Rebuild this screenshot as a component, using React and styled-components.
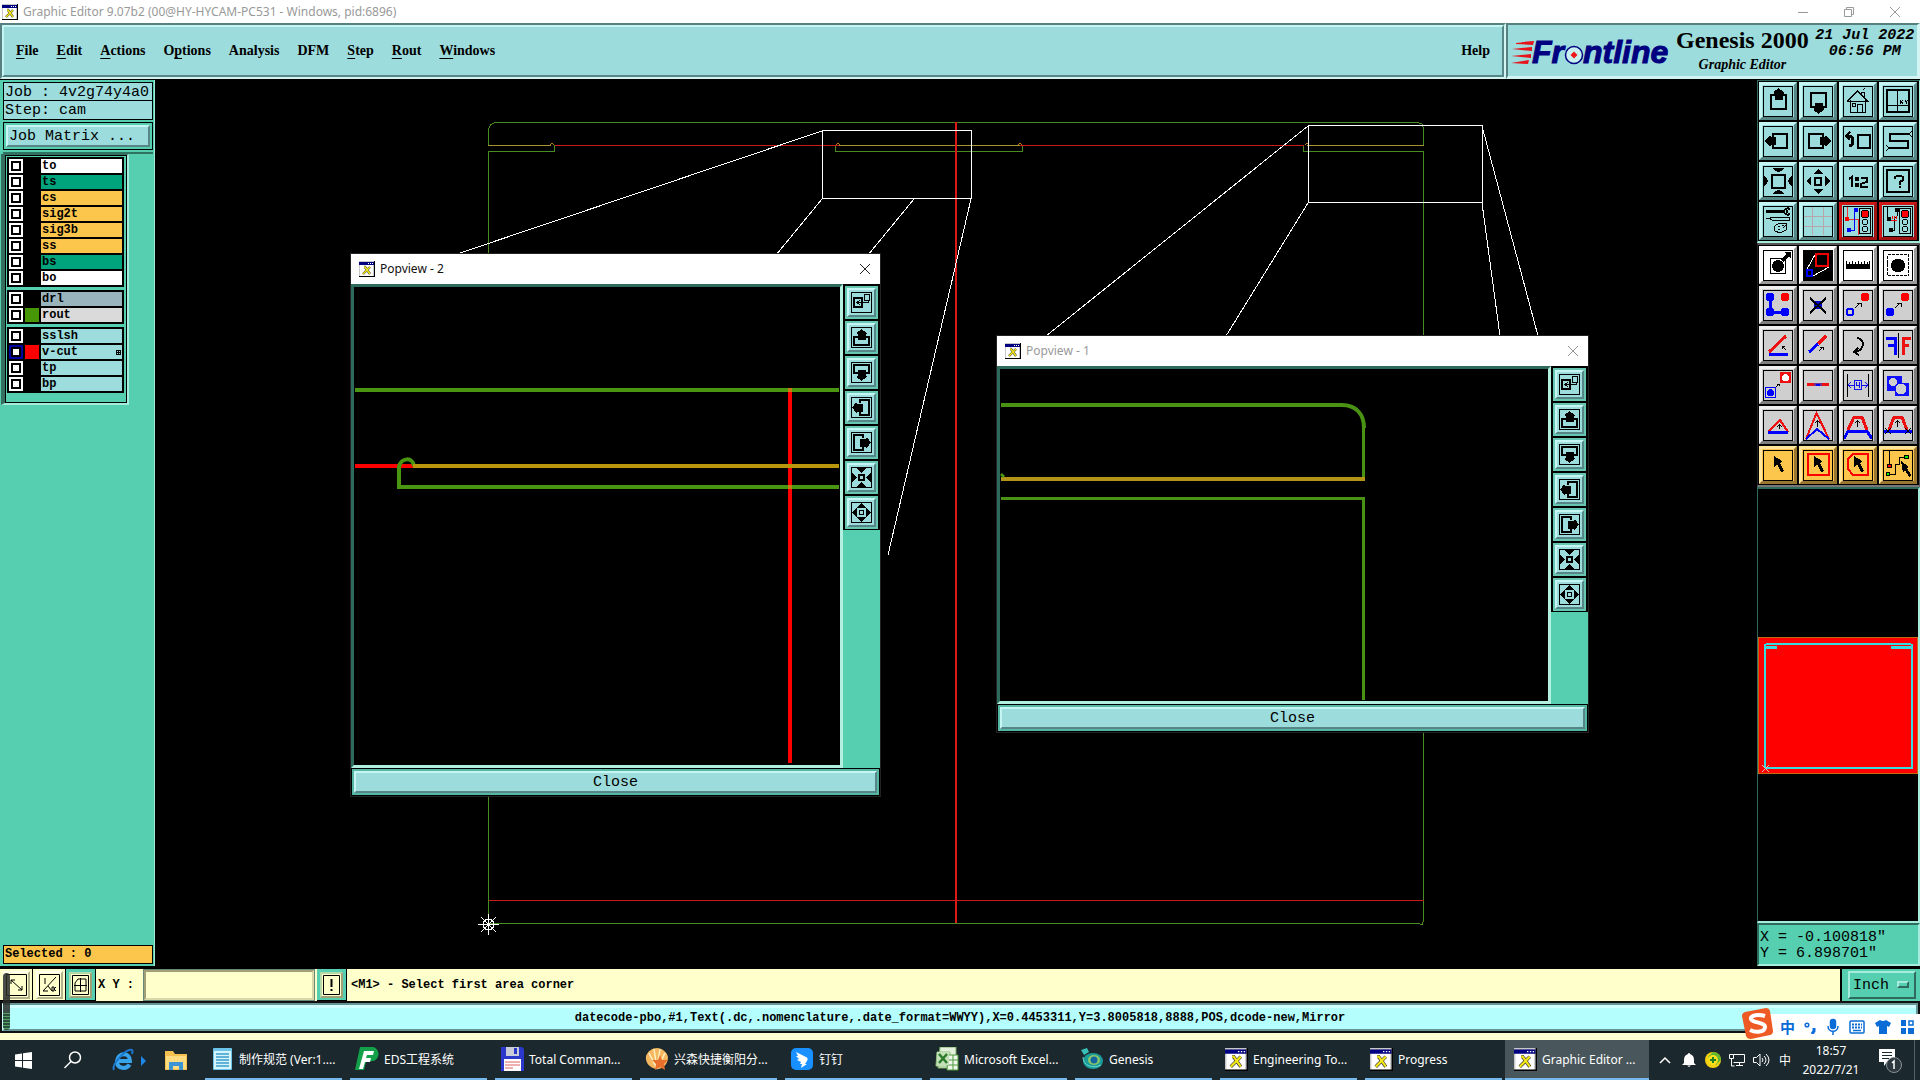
import React, { useState } from "react";
import styled, { createGlobalStyle, css } from "styled-components";

const GlobalStyle = createGlobalStyle`
  * {
    box-sizing: border-box;
  }
  body {
    margin: 0;
    background: #000;
    overflow: hidden;
  }
  button, input, select {
    font: inherit;
    color: inherit;
    margin: 0;
    padding: 0;
    border: 0;
    border-radius: 0;
    background: none;
  }
  svg {
    display: block;
  }
`;

const uiFont = `"Noto Sans", "Noto Sans CJK SC", sans-serif`;
const monoFont = `"Liberation Mono", monospace`;
const serifFont = `"Liberation Serif", serif`;

const raised = css`
  border-style: solid;
  border-color: #c6f6f4 #578686 #578686 #c6f6f4;
`;

const sunken = css`
  border-style: solid;
  border-color: #578080 #d2f4f2 #d2f4f2 #578080;
`;

const Page = styled.div`
  display: flex;
  flex-direction: column;
  min-height: 100vh;
  background: #000;
  color: #000;
  font-family: ${monoFont};
  font-size: 15px;
`;

const TitleBar = styled.div`
  display: flex;
  align-items: center;
  height: 23px;
  padding: 0 2px;
  background: #fff;
  color: #999;
  font-family: ${uiFont};
  font-size: 12px;
`;

const TitleText = styled.span`
  flex: 1;
  margin-left: 5px;
  white-space: nowrap;
`;

const WindowButton = styled.button`
  display: flex;
  align-items: center;
  justify-content: center;
  width: 46px;
  height: 22px;
`;

const Header = styled.header`
  display: flex;
  height: 57px;
  border-bottom: 1px solid #000;
  background: #9cdcdc;
  font-family: ${serifFont};
  font-weight: bold;
  font-size: 14px;
`;

const MenuFrame = styled.div`
  ${sunken}
  flex: 1;
  display: flex;
  border-width: 2px;
`;

const MenuBar = styled.nav`
  ${raised}
  flex: 1;
  display: flex;
  align-items: center;
  gap: 18px;
  padding: 0 12px;
  border-width: 2px;
`;

const MenuButton = styled.button`
  margin-left: ${(props) => (props.$end ? "auto" : "0")};

  u {
    text-underline-offset: 3px;
  }
`;

const Brand = styled.div`
  ${sunken}
  display: flex;
  align-items: center;
  width: 414px;
  border-width: 2px 3px 3px 2px;
  white-space: nowrap;
`;

const BrandNames = styled.div`
  display: flex;
  flex-direction: column;
  align-items: center;
  margin-left: 2px;
`;

const Product = styled.span`
  font-size: 24px;
  line-height: 28px;
`;

const SubProduct = styled.span`
  font-style: italic;
  line-height: 22px;
`;

const Stamp = styled.time`
  align-self: flex-start;
  flex: 1;
  padding: 3px 0 0 4px;
  text-align: center;
  font-family: ${monoFont};
  font-style: italic;
  font-size: 15px;
  line-height: 16px;
`;

const Main = styled.main`
  flex: 1;
  display: flex;
  border-bottom: 2px solid #000;
`;

const Sidebar = styled.aside`
  display: flex;
  flex-direction: column;
  width: 155px;
  padding: 2px 1px 2px 3px;
  border-right: 1px solid #a0e8d8;
  background: #56cfb0;
`;

const JobLine = styled.div`
  height: 19px;
  padding-left: 1px;
  border: 1px solid #000;
  background: #9cdcdc;
  line-height: 19px;
  white-space: nowrap;

  & + & {
    border-top: 0;
  }
`;

const MatrixFrame = styled.div`
  margin: 2px 0 2px;
  padding: 2px;
  border: 1px solid #000;
`;

const MatrixButton = styled.button`
  ${raised}
  display: block;
  width: 100%;
  height: 22px;
  padding-left: 1px;
  border-width: 2px;
  background: #9cdcdc;
  text-align: left;
  line-height: 17px;
`;

const LayerArea = styled.div`
  flex: 1;
  border-top: 2px solid #2f7262;
`;

const LayerPanel = styled.div`
  width: 128px;
  margin-left: -2px;
  border: solid;
  border-width: 1px 2px 2px 4px;
  border-color: #356f60 #a6ecdc #a6ecdc #356f60;
`;

const LayerList = styled.div`
  display: flex;
  flex-direction: column;
  gap: 3px;
  padding: 1px 2px 9px 1px;
  border: 1px solid #000;
`;

const LayerGroup = styled.div`
  display: flex;
  flex-direction: column;
  gap: 2px;
  padding: 2px;
  background: #000;
`;

const LayerRow = styled.label`
  display: flex;
  gap: 2px;
  height: 14px;
  font-size: 12px;
  font-weight: bold;
  line-height: 13px;
`;

const LayerCheck = styled.input`
  appearance: none;
  width: 14px;
  height: 14px;
  border: 2px solid #fff;
  background: #fff;
  box-shadow: inset 0 0 0 2px #000;

  &:checked {
    border-color: #0000a0;
  }
`;

const LayerColor = styled.span`
  width: 14px;
  background: ${(props) => props.$color || "#000"};
`;

const LayerName = styled.span`
  flex: 1;
  display: flex;
  align-items: center;
  justify-content: space-between;
  padding: 0 1px;
  background: ${(props) => props.$color};
`;

const SelectedBox = styled.div`
  height: 19px;
  padding-left: 1px;
  border: 1px solid #000;
  background: #fcc54c;
  font-size: 12px;
  font-weight: bold;
  line-height: 17px;
`;

const Workspace = styled.section`
  position: relative;
  flex: 1;
  overflow: hidden;
  background: #000;
`;

const Drawing = styled.svg`
  width: 100%;
  height: 100%;
`;

const DrawingLayer = styled.div`
  position: absolute;
  inset: 0;
`;

const PopWindow = styled.div`
  position: absolute;
  left: ${(props) => props.$x}px;
  top: ${(props) => props.$y}px;
  width: ${(props) => props.$w}px;
  background: #000;
  outline: 1px solid #222;
`;

const PopTitle = styled.div`
  display: flex;
  align-items: center;
  height: 30px;
  padding: 0 7px 1px 8px;
  background: #fff;
  color: ${(props) => (props.$active ? "#111" : "#999")};
  font-family: ${uiFont};
  font-size: 12px;
`;

const PopClose = styled.button`
  padding: 8px;
  margin-right: -6px;
`;

const PopBody = styled.div`
  display: flex;
  height: ${(props) => props.$h}px;
`;

const PopView = styled.div`
  flex: 1;
  min-width: 0;
  border: 3px solid;
  border-color: #2f6b5d #b4f0e0 #b4f0e0 #2f6b5d;
  overflow: hidden;
`;

const PopTools = styled.div`
  display: flex;
  flex-direction: column;
  gap: 2px;
  width: 37px;
  padding: 2px 2px 0;
  background: linear-gradient(#000 246px, #56cfb0 246px);
`;

const PopTool = styled.button`
  height: 33px;
  border: 2px solid #66c6b2;

  span {
    ${raised}
    display: flex;
    align-items: center;
    justify-content: center;
    height: 29px;
    border-width: 2px;
    background: #9cdcdc;
  }
`;

const PopFooter = styled.button`
  display: block;
  width: 100%;
  padding: 2px;
  border: 1px solid #000;
  background: #56b8a4;

  span {
    ${raised}
    display: block;
    height: 22px;
    border-width: 2px;
    background: #9cdcdc;
    line-height: 19px;
  }
`;

const ToolColumn = styled.aside`
  display: flex;
  flex-direction: column;
  width: 163px;
`;

const ToolGrid = styled.div`
  display: grid;
  grid-template-columns: repeat(4, 38px);
  gap: 2px;
  padding: 1px;
  border: 1px solid;
  border-color: ${(props) =>
    props.$gray ? "#555 #555 #777 #222" : "#2f6b5d #a6ecdc #a6ecdc #2f6b5d"};
  border-width: ${(props) => (props.$gray ? "2px 1px 2px" : "1px 1px 2px")};
`;

const faces = {
  teal: ["#9cdcdc", "#c6f6f4", "#578686"],
  white: ["#ffffff", "#ffffff", "#9a9a9a"],
  gray: ["#cfcfcf", "#f0f0f0", "#7e7e7e"],
  orange: ["#fcc54c", "#ffe49c", "#9a7630"],
  alert: ["#9cdcdc", "#d01818", "#a01414"],
};

const ToolButton = styled.button`
  display: flex;
  align-items: center;
  justify-content: center;
  height: 38px;
  border: 3px solid;
  border-color: ${(props) => {
    const [, light, dark] = faces[props.$face];
    return `${light} ${dark} ${dark} ${light}`;
  }};
  background: ${(props) => faces[props.$face][0]};
`;

const Overview = styled.div`
  flex: 1;
  display: flex;
  align-items: center;
  border-top: 2px solid #2f6b5d;
  border-left: 1px solid #2f6b5d;
  border-right: 2px solid #a6ecdc;
  border-bottom: 2px solid #a6ecdc;
`;

const Coordinates = styled.div`
  height: 43px;
  padding: 5px 0 0 1px;
  border: 2px solid;
  border-color: #2f6b5d #a6ecdc #a6ecdc #2f6b5d;
  background: #56cfb0;
  line-height: 16px;
`;

const BottomArea = styled.footer`
  position: relative;
`;

const CommandBar = styled.div`
  display: flex;
  height: 33px;
  border-top: 1px solid #000;
  background: #ffffcc;
  font-size: 12px;
  font-weight: bold;
`;

const CommandButton = styled.button`
  display: flex;
  align-items: center;
  justify-content: center;
  width: ${(props) => (props.$on ? 30 : 33)}px;
  border: solid #000;
  border-width: 0 1px 1px 0;
  background: ${(props) => (props.$on ? "#56cfb0" : "#ffffcc")};

  span {
    padding: 1px;
    border: 2px solid;
    border-color: ${(props) =>
      props.$on ? "#b4d8a8 #a0a078 #a0a078 #b4d8a8" : "#fffff0 #b4b48c #b4b48c #fffff0"};
    background: #ffffcc;
  }
`;

const EntryLabel = styled.label`
  display: flex;
  align-items: center;
  flex-shrink: 0;
  width: 47px;
  padding-left: 2px;
`;

const Entry = styled.input`
  width: 170px;
  margin: 1px 3px 1px 1px;
  padding-left: 4px;
  border: 2px solid;
  border-color: #a0a078 #d8d8a8 #d8d8a8 #a0a078;
  outline: 1px solid #688878;
`;

const Prompt = styled.div`
  flex: 1;
  padding-left: 4px;
  line-height: 32px;
`;

const UnitBox = styled.div`
  position: relative;
  width: 80px;
  padding: 2px 4px 2px 6px;
  border-left: 2px solid #000;
  background: #56cfb0;
  font-size: 15px;
  font-weight: normal;
`;

const UnitSelect = styled.select`
  appearance: none;
  width: 68px;
  height: 28px;
  padding-left: 3px;
  border: 2px solid;
  border-color: #a6ecdc #2f6b5d #2f6b5d #a6ecdc;
`;

const UnitMark = styled.i`
  position: absolute;
  right: 11px;
  top: 12px;
  width: 12px;
  height: 7px;
  border: 2px solid;
  border-color: #a6ecdc #2f6b5d #2f6b5d #a6ecdc;
  pointer-events: none;
`;

const StatusFrame = styled.div`
  padding: 0 2px 9px;
  border-top: 2px solid #111;
  background: linear-gradient(#111 30px, #ffffd2 30px);
`;

const StatusLine = styled.div`
  height: 28px;
  border: 2px solid;
  border-color: #679494 #679494 #679494 #d0ffff;
  background: #b4fefe;
  box-shadow: inset 0 3px #d0ffff;
  font-size: 12px;
  font-weight: bold;
  line-height: 26px;
  text-align: center;
`;

const LevelMeter = styled.div`
  position: absolute;
  left: 3px;
  top: 5px;
  width: 7px;
  height: 57px;
  border-radius: 4px;
  background: repeating-linear-gradient(#55a065 0 1px, #2c5040 1px 3px) bottom / 100% 17px no-repeat,
    rgba(40, 44, 40, 0.85);
`;

const ImeBar = styled.div`
  position: absolute;
  right: 0;
  bottom: 1px;
  display: flex;
  align-items: center;
  justify-content: space-between;
  width: 166px;
  height: 25px;
  padding: 0 5px 0 26px;
  background: #fff;
  color: #0a6cd6;
  font-family: "Noto Sans CJK SC", sans-serif;
  font-size: 15px;
  font-weight: bold;
`;

const ImeLogo = styled.svg`
  position: absolute;
  left: -12px;
  bottom: 0;
`;

const TaskBar = styled.nav`
  display: flex;
  height: 40px;
  background: #1b282d;
  color: #fff;
  font-family: ${uiFont};
  font-size: 12px;
`;

const Pinned = styled.div`
  display: flex;
  align-items: center;
  width: 205px;
  padding-left: 15px;
`;

const PinnedButton = styled.button`
  width: ${(props) => props.$w}px;
`;

const TaskList = styled.div`
  display: flex;
  gap: 8px;
`;

const Task = styled.button`
  display: flex;
  align-items: center;
  gap: 5px;
  width: ${(props) => (props.$active ? 144 : 137)}px;
  padding-left: ${(props) => (props.$active ? 9 : 5)}px;
  margin-left: ${(props) => (props.$active ? -5 : 0)}px;
  border-bottom: 2px solid #76b9ed;
  background: ${(props) => (props.$active ? "#49565b" : "none")};
  white-space: nowrap;
`;

const Tray = styled.div`
  display: flex;
  align-items: center;
  margin-left: auto;
`;

const TrayButton = styled.button`
  display: flex;
  align-items: center;
  justify-content: center;
  width: 24px;
  height: 38px;
`;

const Clock = styled.time`
  width: 68px;
  text-align: center;
  line-height: 19px;
`;

const Notice = styled.button`
  width: 49px;
  padding-left: 12px;
`;

const ShowDesktop = styled.span`
  width: 6px;
  height: 40px;
  border-left: 1px solid #566167;
`;

const AppIcon = ({ size = 16 }) => (
  <svg width={size} height={size} viewBox="0 0 16 16">
    <rect width="16" height="16" fill="#c8c8c8" />
    <path d="M1 3h13v12H1z" fill="#fff" />
    <path d="M0 1h15v3H0z" fill="#000080" />
    <path d="M9 2h1v1H9zM11 2h1v1h-1zM13 2h1v1h-1z" fill="#fff" />
    <path d="M15.5 0v16M0 15.5h16" stroke="#000" />
    <path d="M5 6h1l5 7M11 6l-7 7" fill="none" stroke="#333" strokeWidth="2.4" />
    <path d="M5 6h1l5 7M11 6l-7 7" fill="none" stroke="#f4e818" strokeWidth="1.5" />
  </svg>
);

const Cross = ({ color }) => (
  <svg width="12" height="12" viewBox="0 0 12 12">
    <path d="M1 1l10 10M11 1L1 11" stroke={color} fill="none" />
  </svg>
);

const smallArrow = (d, head) => (
  <g fill="none" stroke="#000">
    <path d={d} />
    <path d={head} />
  </g>
);

const cursor = <path d="M11 6l8 5-2 2 4 8-3 1-4-8-3 3z" fill="#000" />;

const lights = (
  <g stroke="#000">
    <rect x="16.5" y="2.5" width="11" height="25" fill="none" />
    <circle cx="22" cy="8" r="4" fill="#f00" />
    <circle cx="22" cy="16" r="2.8" fill="none" />
    <circle cx="22" cy="23" r="2.8" fill="none" />
  </g>
);

const glyphs = {
  up: (
    <>
      <rect x="8" y="9" width="15" height="14" fill="none" stroke="#000" strokeWidth="2" />
      <path d="M15.5 2l5 4v2h-1v6h-8V8h-1V6z" />
    </>
  ),
  down: (
    <>
      <rect x="8" y="7" width="15" height="14" fill="none" stroke="#000" strokeWidth="2" />
      <path d="M15.5 28l-5-4v-2h1v-5h8v5h1v2z" />
    </>
  ),
  home: (
    <path
      d="M7.5 14v12.5h15V14M4 15.5L14.5 5 25 15.5H4M14.5 26v-8h5v8M9.5 17.5h3v3h-3zM18.5 8V6h3v6M20 4l2-2"
      fill="none"
      stroke="#000"
    />
  ),
  page: (
    <g fill="none" stroke="#000">
      <rect x="4" y="4" width="22" height="22" strokeWidth="2" />
      <path d="M14.5 4v22M4 19.5h22M17 14l3 4M20 14l-3 4M22 14l1 2v2M25 14l-2 2" />
    </g>
  ),
  left: (
    <>
      <rect x="10" y="8" width="14" height="14" fill="none" stroke="#000" strokeWidth="2" />
      <path d="M2 15l4-5h2v1h5v8H8v1H6z" />
    </>
  ),
  right: (
    <>
      <rect x="6" y="8" width="14" height="14" fill="none" stroke="#000" strokeWidth="2" />
      <path d="M28 15l-4-5h-2v1h-5v8h5v1h2z" />
    </>
  ),
  back: (
    <g fill="none" stroke="#000" strokeWidth="2">
      <rect x="15" y="9" width="12" height="13" />
      <path d="M4 10h3c4 0 4 10-1 10" strokeWidth="3" />
      <path d="M7 6L3 10l4 4" />
    </g>
  ),
  snake: (
    <g fill="none" stroke="#000">
      <path d="M26 8H7v7h18v7H6" strokeWidth="2" />
      <path d="M26 8l3-3M26 8l3 3M6 22l-3-3M6 22l-3 3" />
    </g>
  ),
  fit: (
    <>
      <rect x="9" y="9" width="13" height="13" fill="none" stroke="#000" strokeWidth="2" />
      <path d="M10 2h11v1l-3 2-2.5 1-2.5-1-3-2zM10 28h11v-1l-3-2-2.5-1-2.5 1-3 2zM1 10v10h1l2-3 1-2-1-2-2-3zM29 10v10h-1l-2-3-1-2 1-2 2-3z" />
    </>
  ),
  expand: (
    <>
      <rect x="12" y="12" width="6" height="7" fill="none" stroke="#000" strokeWidth="2" />
      <path d="M10 8h10l-5-5zM10 23h10l-5 5zM8 10v10l-5-5zM22 10v10l5-5z" />
    </>
  ),
  ratio: (
    <path
      d="M6 13l3-2v10M13 12h2v2h-2zM13 18h2v2h-2zM18 12h6v4h-1l-5 2v3h7"
      fill="none"
      stroke="#000"
      strokeWidth="2"
    />
  ),
  help: (
    <g fill="none" stroke="#000" strokeWidth="2">
      <rect x="4" y="4" width="22" height="22" />
      <path d="M12 13v-2l2-1h4l2 1v3l-3 2v3M16 21h2" />
    </g>
  ),
  tools: (
    <g fill="none" stroke="#000">
      <path d="M3 5.5h17" strokeWidth="3" />
      <path d="M27 3a4 3 0 1 0 0 5M24 4v3" strokeWidth="2" />
      <path d="M3 12.500h4l2-1.5h17v3H9l-2-1.5" />
      <path d="M13 19l4-2 7 1-1 6-6 3-5-2-1-4zM15 20h2M19 19h2M15 23h2M20 22l3-3" />
    </g>
  ),
  grid: <path d="M9.5 1v28M20.5 1v28M1 10.5h28M1 20.5h28" stroke="#b8a6ac" fill="none" />,
  netRed: (
    <>
      <path d="M4.5 1v12h11v16" stroke="#e33" fill="none" />
      <path d="M13 4h-2v20H6" stroke="#00f" fill="none" />
      <circle cx="13" cy="4" r="2.5" fill="#00f" />
      <circle cx="6" cy="24" r="2.5" fill="#00f" />
      <circle cx="4" cy="13" r="2.5" fill="#f00" />
      {lights}
    </>
  ),
  netBlack: (
    <>
      <path d="M4.5 1v12M14 4v6l-3 3v11H8" stroke="#000" fill="none" />
      <circle cx="14" cy="4" r="2.5" />
      <circle cx="8" cy="24" r="2.5" />
      <circle cx="6" cy="13" r="2.5" />
      <path d="M8 14h6M9.5 10v3M11.5 10v3M13.5 10v3" stroke="#f00" />
      {lights}
    </>
  ),
  selectPad: (
    <>
      <rect x="7.5" y="8.5" width="15" height="15" fill="none" stroke="#000" />
      <circle cx="15" cy="16" r="6" />
      <path d="M19 11l6-6" stroke="#000" strokeWidth="3" />
      <path d="M21 2h7v7z" />
    </>
  ),
  zoomPair: (
    <>
      <rect width="30" height="31" />
      <path d="M13 3L4 19M26 17l-16 9" stroke="#fff" />
      <rect x="13" y="4" width="12" height="12" fill="none" stroke="#e00" strokeWidth="2" />
      <rect x="4" y="20" width="5" height="6" fill="none" stroke="#00f" strokeWidth="2" />
    </>
  ),
  ruler: (
    <path d="M3 19v-8h1v3h2v-2h1v2h2v-3h1v3h2v-2h1v2h2v-3h1v3h2v-2h1v2h2v-3h1v3h2v-2h1v2h1v-3h1v8z" />
  ),
  dashed: (
    <>
      <rect x="4.5" y="4.5" width="21" height="21" fill="none" stroke="#000" strokeDasharray="3 1" />
      <circle cx="15" cy="15.5" r="7" />
    </>
  ),
  chain: (
    <g fill="#00f">
      <path d="M7 7v15h15" fill="none" stroke="#00f" strokeWidth="3" />
      <circle cx="7" cy="7" r="4.5" />
      <circle cx="7" cy="22" r="4.5" />
      <circle cx="22" cy="22" r="4.5" />
      <circle cx="22" cy="7" r="4.5" fill="#f00" />
    </g>
  ),
  remove: (
    <>
      <circle cx="15" cy="15" r="4.5" fill="#00c" />
      <path d="M7 8l16 15M23 8L7 23" stroke="#000" strokeWidth="2" />
    </>
  ),
  copy: (
    <>
      <circle cx="7" cy="22" r="3.5" fill="none" stroke="#00f" strokeWidth="2" />
      <circle cx="22" cy="7" r="4.5" fill="#f00" />
      {smallArrow("M12 18l5-5", "M14 13h4v4")}
    </>
  ),
  move: (
    <>
      <circle cx="7" cy="22" r="4.5" fill="#00f" />
      <circle cx="22" cy="7" r="4.5" fill="#f00" />
      {smallArrow("M12 18l5-5", "M14 13h4v4")}
    </>
  ),
  angle: (
    <>
      <path d="M6 22L23 6" stroke="#e11" strokeWidth="3" />
      <path d="M6 24h19" stroke="#00f" strokeWidth="3" />
      {smallArrow("M23 20l-4-4", "M19 19v-3h3")}
    </>
  ),
  extend: (
    <>
      <path d="M15 14l8-8" stroke="#e11" strokeWidth="3" />
      <path d="M6 22l9-8" stroke="#00f" strokeWidth="3" />
      {smallArrow("M16 21l4-4", "M17 17h3v3")}
    </>
  ),
  rotate: (
    <g fill="none" stroke="#000" strokeWidth="2">
      <path d="M14 8c9 1 7 13-2 14" />
      <path d="M15 18l-4 4 5 3" />
    </g>
  ),
  mirror: (
    <g fill="none" strokeWidth="3">
      <path d="M3 8h9v17M5 15h7" stroke="#00f" />
      <path d="M28 8h-8v17M26 15h-6" stroke="#e11" />
      <path d="M15.5 3v25" stroke="#000" strokeWidth="1" />
    </g>
  ),
  swap: (
    <>
      <rect x="17" y="2" width="11" height="11" fill="#e11" />
      <circle cx="22.5" cy="7.5" r="3.5" fill="#fff" />
      <rect x="2.5" y="17.5" width="10" height="10" fill="none" stroke="#00f" />
      <circle cx="7.5" cy="22.5" r="3.5" fill="#00f" />
      {smallArrow("M13 17l3-3", "M14 14h2v2")}
    </>
  ),
  segment: (
    <>
      <path d="M4 14.500h22" stroke="#e11" strokeWidth="3" />
      <path d="M11 14.500h8" stroke="#703090" strokeWidth="3" />
      <path d="M13 14.500h4" stroke="#00f" strokeWidth="2" />
    </>
  ),
  spacing: (
    <g fill="none">
      <path d="M4.5 4v23M25.5 4v23" stroke="#000" />
      <path
        d="M11.500 10.500h7v9h-7zM13.500 12v3h3M16.500 12v6M11 15H5M8 12l-3 3 3 3M19 15h6M22 12l3 3-3 3"
        stroke="#11e"
      />
    </g>
  ),
  merge: (
    <>
      <path d="M4 6h15v7h7v13H12v-5H4z" fill="#11f" />
      <circle cx="10" cy="12" r="4" fill="#cfcfcf" />
      <circle cx="18" cy="19" r="5.5" fill="#cfcfcf" />
    </>
  ),
  triangle: (
    <g fill="none">
      <path d="M5 22L17 10l8 12" stroke="#e11" strokeWidth="2" />
      <path d="M5 22.5h20" stroke="#00f" strokeWidth="3" />
      {smallArrow("M16.5 19v-4", "M14 17l2.500-2.500L19 17")}
    </g>
  ),
  peak: (
    <g fill="none" strokeWidth="2">
      <path d="M3 29L13.5 3 26 29" stroke="#e11" />
      <path d="M3 29l11-10 12 10" stroke="#00f" />
      <path d="M14.5 17v-6M12 13l2.500-2.500L17 13" stroke="#000" strokeWidth="1" />
    </g>
  ),
  bridge: (
    <g fill="none" strokeWidth="3">
      <path d="M5 20l6-13h8l5 13" stroke="#e11" />
      <path d="M1 29l4-8h19l5 8" stroke="#00f" />
      <path d="M14.5 17v-6M12 13l2.500-2.500L17 13" stroke="#000" strokeWidth="1" />
    </g>
  ),
  bridgeCut: (
    <g fill="none" strokeWidth="3">
      <path d="M6 20l5-13h8l5 13" stroke="#e11" />
      <path d="M1 21h28" stroke="#00f" />
      <path
        d="M2 18l6 6M8 18l-6 6M22 18l6 6M28 18l-6 6M14.500 17v-6M12 13l2.500-2.500L17 13"
        stroke="#000"
        strokeWidth="1"
      />
    </g>
  ),
  pick: cursor,
  pickRect: (
    <>
      <rect x="5" y="4" width="21" height="21" fill="none" stroke="#f00" strokeWidth="2" />
      {cursor}
    </>
  ),
  pickPoly: (
    <>
      <path d="M10 4h15v21H10l-5-6V9z" fill="none" stroke="#f00" strokeWidth="2" />
      {cursor}
    </>
  ),
  pickNet: (
    <>
      <path d="M6.5 1v14M5 24h7V14h4V7h6" fill="none" stroke="#000" />
      <circle cx="23.5" cy="7" r="2" fill="#0e0" stroke="#000" />
      <circle cx="6.5" cy="16" r="2" fill="#f00" stroke="#000" />
      <circle cx="5" cy="24" r="2" fill="#0e0" stroke="#000" />
      <path d="M18 11l8 6-2 1 4 7-2 2-4-7-2 3z" />
    </>
  ),
};

const Glyph = ({ name }) => (
  <svg width="30" height="31" viewBox="0 0 30 31" shapeRendering="crispEdges">
    {glyphs[name]}
    <rect x="0.5" y="0.5" width="29" height="30" fill="none" stroke="#000" />
  </svg>
);

const viewTools = [
  ["up", "Pan up"], ["down", "Pan down"], ["home", "Home"], ["page", "Pan XY"],
  ["left", "Pan left"], ["right", "Pan right"], ["back", "Previous view"], ["snake", "Snake pan"],
  ["fit", "Zoom in"], ["expand", "Zoom out"], ["ratio", "Scale"], ["help", "Query"],
  ["tools", "Setup"], ["grid", "Grid"], ["netRed", "Online net"], ["netBlack", "Online DRC"],
];

const editTools = [
  ["selectPad", "Move to layer"], ["zoomPair", "Popview"], ["ruler", "Measure"], ["dashed", "Select pad"],
  ["chain", "Add feature"], ["remove", "Delete"], ["copy", "Copy"], ["move", "Move"],
  ["angle", "Angle"], ["extend", "Extend"], ["rotate", "Rotate"], ["mirror", "Mirror"],
  ["swap", "Substitute"], ["segment", "Break"], ["spacing", "Spacing"], ["merge", "Merge"],
  ["triangle", "Stretch corner"], ["peak", "Stretch line"], ["bridge", "Stretch parallel"], ["bridgeCut", "Stretch cut"],
  ["pick", "Select"], ["pickRect", "Select rectangle"], ["pickPoly", "Select polygon"], ["pickNet", "Select net"],
];

const editFace = (index) => {
  if (index < 4) return "white";
  return index < 20 ? "gray" : "orange";
};

const popGlyphs = [
  ["Locate", <g fill="none" stroke="#000"><rect x="3" y="6" width="8" height="9" strokeWidth="2" /><path d="M13.5 2.5h5v6h-5zM6 10.500h11v-2M9 8l-3 2.500L9 13" /></g>],
  ["Pan up", <g><path d="M7 10H3v8h15v-8h-4" fill="none" stroke="#000" strokeWidth="2" /><path d="M10.5 2l5 4v1h-1v6h-8V7h-1V6z" /></g>],
  ["Pan down", <g><path d="M7 11H3V3h15v8h-4" fill="none" stroke="#000" strokeWidth="2" /><path d="M10.5 19l-5-4v-1h1V8h8v6h1v1z" /></g>],
  ["Pan left", <g><path d="M9 6V3h9v15H9v-3" fill="none" stroke="#000" strokeWidth="2" /><path d="M1 10.500l4-5h1v1h6v8H6v1H5z" /></g>],
  ["Pan right", <g><path d="M12 6V3H3v15h9v-3" fill="none" stroke="#000" strokeWidth="2" /><path d="M20 10.500l-4-5h-1v1H9v8h6v1h1z" /></g>],
  ["Zoom in", <g><rect x="8" y="8" width="5" height="5" fill="none" stroke="#000" strokeWidth="2" /><path d="M5 1h11l-5.500 5zM5 20h11l-5.500-5zM1 5v11l5-5.500zM20 5v11l-5-5.500z" /></g>],
  ["Zoom out", <g><rect x="8.5" y="8.5" width="4" height="4" fill="none" stroke="#000" /><path d="M5 6h11l-5.500-5zM5 15h11l-5.500 5zM6 5v11l-5-5.500zM15 5v11l5-5.500z" /></g>],
];

const layerGroups = [
  [
    { name: "to", color: "#ffffff" },
    { name: "ts", color: "#00a47c" },
    { name: "cs", color: "#fcc54c" },
    { name: "sig2t", color: "#fcc54c" },
    { name: "sig3b", color: "#fcc54c" },
    { name: "ss", color: "#fcc54c" },
    { name: "bs", color: "#00a47c" },
    { name: "bo", color: "#ffffff" },
  ],
  [
    { name: "drl", color: "#9ab4be" },
    { name: "rout", color: "#dadada", swatch: "#469606" },
  ],
  [
    { name: "sslsh", color: "#9cdcdc" },
    { name: "v-cut", color: "#9cdcdc", swatch: "#ff0000", work: true },
    { name: "tp", color: "#9cdcdc" },
    { name: "bp", color: "#9cdcdc" },
  ],
];

const menus = [
  ["", "F", "ile"],
  ["", "E", "dit"],
  ["", "A", "ctions"],
  ["O", "p", "tions"],
  ["Analysis", "", ""],
  ["DFM", "", ""],
  ["", "S", "tep"],
  ["", "R", "out"],
  ["", "W", "indows"],
];

const FrontlineLogo = () => (
  <svg width="166" height="44" viewBox="0 0 166 44" role="img" aria-label="Frontline">
    <path
      d="M8 14l18-2-1 4-17-1zM4 20l20-2v4zM3 27l20-2v4zM3 34l18-3-1 4zM14 13l12-1-2 4-10-2zM12 20l12-2-1 4zM11 27l12-2-1 4zM10 34l11-3-1 4z"
      fill="#e8141c"
    />
    <g
      fill="#000080"
      stroke="#000080"
      fontFamily="Liberation Sans, sans-serif"
      fontSize="32"
      fontWeight="bold"
      fontStyle="italic"
    >
      <text x="24" y="34">Fr</text>
      <text x="75" y="34">ntline</text>
    </g>
    <circle cx="66" cy="26" r="8.5" fill="#c8f0f0" stroke="#000080" strokeWidth="1.5" />
    <path d="M66 22.5l3.5 3.5-3.5 3.5-3.5-3.5z" fill="#f01818" />
  </svg>
);

const BoardDrawing = () => (
  <Drawing aria-label="Board outline" shapeRendering="crispEdges">
    <g transform="translate(-155 -80)" fill="none">
      <g stroke="#4a8c24">
        <path d="M488.5 145V129l2-4 4-2.5H1418l4 1.5 1.5 4v17" />
        <path d="M554.5 145v6.500h-66v772h929l5 1 1-4V151.500h-120V145" />
        <path d="M835.5 145v6.500h187V145" />
      </g>
      <path d="M555 145.500h749M489 900.500h935" stroke="#cc1a1a" />
      <path d="M488 145.500h63M839 145.500h181M1307 145.500h117" stroke="#a89430" />
      <path d="M550 145l2-2 2 2M836 145l2-2 2 2M1018 145l2-2 2 2M1305 145l2-2 2 2" stroke="#c07a10" />
      <path d="M956 122v801" stroke="#dc1818" strokeWidth="2" />
      <g stroke="#fff">
        <rect x="822.5" y="130.5" width="149" height="68" />
        <path d="M822 131L460 253M822 199l-46 56M914 199l-46 56M971 199l-83 356" />
        <rect x="1308.5" y="125.5" width="174" height="77" />
        <path d="M1308 126l-262 210M1308 203l-82 133M1482 203l18 133M1482 126l56 210" />
        <path d="M488.5 914v21M478 924.500h21M481 917l15 15M496 917l-15 15" />
        <circle cx="488.5" cy="924.5" r="5.5" />
      </g>
    </g>
  </Drawing>
);

const Popview = ({ title, x, y, w, h, active, onClose, children }) => (
  <PopWindow $x={x} $y={y} $w={w} role="dialog" aria-label={title}>
    <PopTitle $active={active}>
      <AppIcon />
      <TitleText>{title}</TitleText>
      <PopClose aria-label={`Close ${title}`} onClick={onClose}>
        <Cross color={active ? "#222" : "#999"} />
      </PopClose>
    </PopTitle>
    <PopBody $h={h}>
      <PopView>
        <Drawing>
          <g fill="none">{children}</g>
        </Drawing>
      </PopView>
      <PopTools>
        {popGlyphs.map(([label, art]) => (
          <PopTool key={label} aria-label={label}>
            <span>
              <svg width="21" height="21" viewBox="0 0 21 21" shapeRendering="crispEdges">
                {art}
                <rect x="0.5" y="0.5" width="20" height="20" fill="none" stroke="#000" />
              </svg>
            </span>
          </PopTool>
        ))}
      </PopTools>
    </PopBody>
    <PopFooter onClick={onClose}>
      <span>Close</span>
    </PopFooter>
  </PopWindow>
);

const tasks = [
  {
    name: "制作规范 (Ver:1....",
    icon: (
      <svg width="24" height="24" viewBox="0 0 24 24">
        <rect x="3" y="1" width="19" height="22" rx="1" fill="#6cc4e8" />
        <rect x="4" y="4" width="17" height="18" fill="#d4f4fc" />
        <path d="M6 7h13M6 10h13M6 13h13M6 16h13M6 19h13" stroke="#3c9ccc" strokeWidth="1.5" />
      </svg>
    ),
  },
  {
    name: "EDS工程系统",
    icon: (
      <svg width="24" height="24" viewBox="0 0 24 24">
        <path d="M5 0h12a6 7 0 0 1 1 14l-7 1-2 8H0z" fill="#12a04a" />
        <path d="M9 4h10l-1 4h-6l-1 3h5l-1 4h-5l-2 7H4z" fill="#fff" />
      </svg>
    ),
  },
  {
    name: "Total Comman...",
    icon: (
      <svg width="24" height="24" viewBox="0 0 24 24">
        <path d="M1 0h21l2 2v22H1z" fill="#2c38cc" />
        <path d="M6 0h13v9H6z" fill="#c8ccd8" />
        <path d="M14 1h3v6h-3z" fill="#2c38cc" />
        <path d="M4 12h17v12H4z" fill="#fff" />
        <path d="M5 15h15M5 18h15M5 21h8" stroke="#e06060" />
      </svg>
    ),
  },
  {
    name: "兴森快捷衡阳分...",
    icon: (
      <svg width="24" height="24" viewBox="0 0 24 24">
        <path d="M12 22C4 21 0 15 1 9c2-5 6-8 11-8s10 4 11 9c0 6-4 12-11 12z" fill="#f4b860" />
        <path d="M12 22L4 6M12 22L9 2M12 22L15 2M12 22l8-16" stroke="#fff0c0" strokeWidth="1.5" />
        <path d="M15 8l2 5 6 0-4 4 1 6-5-3-5 3 1-6-4-4 6 0z" fill="#e8702c" />
      </svg>
    ),
  },
  {
    name: "钉钉",
    icon: (
      <svg width="24" height="24" viewBox="0 0 24 24">
        <rect x="1" y="1" width="22" height="22" rx="5" fill="#1890ff" />
        <path d="M6 5l10 5c2 1 2 2 1 4l-2 3h2l-6 4 1-4h-2l1-2-4-2 2-1-3-3 2 0z" fill="#fff" />
      </svg>
    ),
  },
  {
    name: "Microsoft Excel...",
    icon: (
      <svg width="24" height="24" viewBox="0 0 24 24">
        <path d="M5 0h16v21H3z" fill="#e4f0dc" stroke="#76ac60" />
        <path d="M2 5h13v14H1z" fill="#f4faf0" stroke="#8cc078" />
        <path d="M4 7l8 10M12 7l-8 10" stroke="#2c7c2c" strokeWidth="2.5" />
        <path d="M13 8h10v15H12zM13 13h10M13 18h10M18 8v15" stroke="#4c9a3c" fill="#eef6ea" />
        <path d="M2 5h12v13H2z" fill="#c4e0b8" />
        <path d="M4 7l8 9M12 7l-8 9" stroke="#2c7c2c" strokeWidth="2.5" />
      </svg>
    ),
  },
  {
    name: "Genesis",
    icon: (
      <svg width="24" height="24" viewBox="0 0 24 24">
        <ellipse cx="13" cy="14" rx="10" ry="8" fill="#1c9c98" />
        <path d="M1 3l6-2 2 4-5 3z" fill="#38c0b8" />
        <ellipse cx="14" cy="13" rx="6" ry="5" fill="#8cc868" />
        <circle cx="14" cy="13" r="3.5" fill="#1464a0" />
        <path d="M3 10c0 9 10 12 18 8" stroke="#6cd8d0" fill="none" />
      </svg>
    ),
  },
  { name: "Engineering To...", icon: <AppIcon size={23} /> },
  { name: "Progress", icon: <AppIcon size={23} /> },
  { name: "Graphic Editor ...", icon: <AppIcon size={23} />, active: true },
];

const App = () => {
  const [xy, setXy] = useState("");
  const [closed, setClosed] = useState({});

  const handleClose = (id) => {
    setClosed({ ...closed, [id]: true });
  };

  return (
    <Page>
      <GlobalStyle />
      <TitleBar>
        <AppIcon />
        <TitleText>Graphic Editor 9.07b2 (00@HY-HYCAM-PC531 - Windows, pid:6896)</TitleText>
        <WindowButton aria-label="Minimize">
          <svg width="10" height="10"><path d="M0 5.5h10" stroke="#999" /></svg>
        </WindowButton>
        <WindowButton aria-label="Restore">
          <svg width="10" height="10" fill="none" stroke="#999">
            <path d="M0.5 2.5h7v7h-7zM2.5 2V0.5h7v7H8" />
          </svg>
        </WindowButton>
        <WindowButton aria-label="Close"><Cross color="#999" /></WindowButton>
      </TitleBar>

      <Header>
        <MenuFrame>
          <MenuBar>
            {menus.map(([before, key, after]) => (
              <MenuButton key={before + key + after}>
                {before}{key && <u>{key}</u>}{after}
              </MenuButton>
            ))}
            <MenuButton $end>Help</MenuButton>
          </MenuBar>
        </MenuFrame>
        <Brand>
          <FrontlineLogo />
          <BrandNames>
            <Product>Genesis 2000</Product>
            <SubProduct>Graphic Editor</SubProduct>
          </BrandNames>
          <Stamp>21 Jul 2022<br />06:56 PM</Stamp>
        </Brand>
      </Header>

      <Main>
        <Sidebar>
          <JobLine>Job : 4v2g74y4a0</JobLine>
          <JobLine>Step: cam</JobLine>
          <MatrixFrame>
            <MatrixButton>Job Matrix ...</MatrixButton>
          </MatrixFrame>
          <LayerArea>
            <LayerPanel>
              <LayerList>
                {layerGroups.map((group, index) => (
                  <LayerGroup key={index}>
                    {group.map((layer) => (
                      <LayerRow key={layer.name}>
                        <LayerCheck type="checkbox" defaultChecked={layer.work} />
                        <LayerColor $color={layer.swatch} />
                        <LayerName $color={layer.color}>
                          {layer.name}
                          {layer.work && (
                            <svg width="5" height="5" shapeRendering="crispEdges">
                              <path d="M0.5 0.5h4v4h-4zM2.5 0v5M0 2.5h5" fill="none" stroke="#000" />
                            </svg>
                          )}
                        </LayerName>
                      </LayerRow>
                    ))}
                  </LayerGroup>
                ))}
              </LayerList>
            </LayerPanel>
          </LayerArea>
          <SelectedBox>Selected : 0</SelectedBox>
        </Sidebar>

        <Workspace>
          <DrawingLayer>
            <BoardDrawing />
          </DrawingLayer>
          {!closed.two && (
            <Popview title="Popview - 2" x={196} y={174} w={529} h={484} active onClose={() => handleClose("two")}>
              <g strokeWidth="4" transform="translate(-354 -287)">
                <path d="M790 390v373M355 466h58" stroke="#ff0000" />
                <path d="M355 390h484M399 487h440" stroke="#4a9610" />
                <path d="M399 489v-22c2-10 14-10 15-1" stroke="#4a9610" />
                <path d="M413 466h426" stroke="#ba960c" />
                <path d="M788 487h4M788 390h4" stroke="#c87c10" />
              </g>
            </Popview>
          )}
          {!closed.one && (
            <Popview title="Popview - 1" x={842} y={256} w={591} h={338} onClose={() => handleClose("one")}>
              <g strokeWidth="3" transform="translate(-1000 -369)" stroke="#4a9214">
                <path d="M1001 405h341c14 0 22 9 22 23" strokeWidth="4" />
                <path d="M1363.5 426v52M1001 498.500h362.500V700" />
                <path d="M1001 479h364" stroke="#b49418" strokeWidth="4" />
                <path d="M1001 474l3 3" />
              </g>
            </Popview>
          )}
        </Workspace>

        <ToolColumn>
          <ToolGrid>
            {viewTools.map(([name, label]) => (
              <ToolButton
                key={name}
                aria-label={label}
                $face={name.startsWith("net") ? "alert" : "teal"}
              >
                <Glyph name={name} />
              </ToolButton>
            ))}
          </ToolGrid>
          <ToolGrid $gray>
            {editTools.map(([name, label], index) => (
              <ToolButton key={name} aria-label={label} $face={editFace(index)}>
                <Glyph name={name} />
              </ToolButton>
            ))}
          </ToolGrid>
          <Overview>
            <svg width="100%" viewBox="0 0 160 137" shapeRendering="crispEdges">
              <rect x="0.5" y="0.5" width="159" height="136" fill="#ff0000" stroke="#c46a10" />
              <path d="M7 131V8l2-1h143l2 1v123H7" fill="none" stroke="#38dce0" strokeWidth="2" />
              <path d="M7 10.500h12M133 10.500h20" stroke="#38dce0" strokeWidth="3" />
              <path d="M4 128l7 7M11 128l-7 7" stroke="#d0c0c0" />
            </svg>
          </Overview>
          <Coordinates>
            X = -0.100818"<br />Y = 6.898701"
          </Coordinates>
        </ToolColumn>
      </Main>

      <BottomArea>
        <CommandBar>
          <CommandButton aria-label="Snap mode">
            <span>
              <svg width="21" height="22" fill="none" stroke="#000">
                <path d="M0.5 0.5h20v21H0.5zM5 6l11 10M5 10V6h4M12 16h4v-4" />
              </svg>
            </span>
          </CommandButton>
          <CommandButton aria-label="Angle mode">
            <span>
              <svg width="21" height="22" fill="none" stroke="#000">
                <path d="M0.5 0.5h20v21H0.5zM17 3L4 17h5M6 4v6M9 12l4 5M13 13h2v4h-2zM17 13l-2 2 2 2" />
              </svg>
            </span>
          </CommandButton>
          <CommandButton $on aria-label="Grid mode">
            <span>
              <svg width="17" height="20" fill="none" stroke="#000">
                <path d="M0.5 0.5h16v19H0.5zM3 8l3-4h8v12H3zM8.5 3v14M2 10.5h13" />
              </svg>
            </span>
          </CommandButton>
          <EntryLabel htmlFor="xy">X Y :</EntryLabel>
          <Entry id="xy" value={xy} onChange={(e) => setXy(e.target.value)} />
          <CommandButton $on aria-label="Alert">
            <span>
              <svg width="17" height="20" fill="none" stroke="#000">
                <path d="M0.5 0.5h16v19H0.5z" />
                <path d="M8.5 4v8M8.5 14v2" strokeWidth="2" />
              </svg>
            </span>
          </CommandButton>
          <Prompt>&lt;M1&gt; - Select first area corner</Prompt>
          <UnitBox>
            <UnitSelect aria-label="Units" defaultValue="Inch">
              <option>Inch</option>
              <option>MM</option>
            </UnitSelect>
            <UnitMark />
          </UnitBox>
        </CommandBar>
        <StatusFrame>
          <StatusLine>
            datecode-pbo,#1,Text(.dc,.nomenclature,.date_format=WWYY),X=0.4453311,Y=3.8005818,8888,POS,dcode-new,Mirror
          </StatusLine>
        </StatusFrame>
        <LevelMeter />
        <ImeBar>
          <ImeLogo width="31" height="31" viewBox="0 0 31 31">
            <path d="M3 4l21-4q3 0 4 3l3 20q0 3-3 4L9 31q-4 0-5-3L0 8q0-3 3-4z" fill="#ee5a24" />
            <path d="M23 8c-6-2-15-1-14 3s14 3 14 8-9 6-15 3" fill="none" stroke="#fff" strokeWidth="4" />
          </ImeLogo>
          <span>中</span>
          <svg width="12" height="14" fill="none" stroke="#0a6cd6" strokeWidth="1.5">
            <circle cx="3" cy="5" r="1.8" />
            <path d="M10 8v3l-2 3" strokeWidth="3" />
          </svg>
          <svg width="14" height="18" fill="none" stroke="#0a6cd6" strokeWidth="1.5">
            <rect x="4.5" y="1.5" width="5" height="9" rx="2.5" fill="#0a6cd6" />
            <path d="M2 8c0 7 10 7 10 0M7 13v4" />
          </svg>
          <svg width="16" height="14" fill="none" stroke="#0a6cd6">
            <rect x="1" y="1" width="14" height="12" rx="1" strokeWidth="1.5" />
            <path d="M3 4.5h10M3 7.5h10" strokeDasharray="2 1" strokeWidth="2" />
            <path d="M4 10.5h8" strokeWidth="1.5" />
          </svg>
          <svg width="16" height="15">
            <path d="M5 1q3 2 6 0l5 3-2 4-2-1v8H4V7L2 8 0 4z" fill="#0a6cd6" />
          </svg>
          <svg width="15" height="14" fill="#0a6cd6">
            <path d="M1 0h5v6H1zM1 8h5v6H1zM8 8h6v6H8z" />
            <path d="M9 1h4v4H9z" fill="none" stroke="#0a6cd6" strokeWidth="1.5" />
          </svg>
        </ImeBar>
      </BottomArea>

      <TaskBar>
        <Pinned>
          <PinnedButton $w={49} aria-label="Start">
            <svg width="17" height="17" fill="#fff">
              <path d="M0 2.5l7-1V8H0zM8 1.3L17 0v8H8zM0 9h7v6.500l-7-1zM8 9h9v8l-9-1.300z" />
            </svg>
          </PinnedButton>
          <PinnedButton $w={48} aria-label="Search">
            <svg width="18" height="18" fill="none" stroke="#fff" strokeWidth="1.5">
              <circle cx="11" cy="6.5" r="5.5" />
              <path d="M7 10.5L0.5 17" />
            </svg>
          </PinnedButton>
          <PinnedButton $w={53} aria-label="Internet Explorer">
            <svg width="34" height="24" fill="none">
              <path d="M4 13h14c0-9-12-9-13 0 0 9 10 8 12.500 3.500" stroke="#38a4ec" strokeWidth="4" />
              <path d="M2 22C-1 17 14 0 20 2q1 1 0 4" stroke="#1c78d0" strokeWidth="2" />
              <path d="M29 8l5 5-5 5z" fill="#1c88e8" />
            </svg>
          </PinnedButton>
          <PinnedButton $w={24} aria-label="File Explorer">
            <svg width="22" height="19">
              <path d="M0 0h8l2 3h12v16H0z" fill="#f4c050" />
              <path d="M1 5h20v13H1z" fill="#ffdc80" />
              <path d="M4 19v-8h14v8h-4v-4H8v4z" fill="#3c94d4" />
            </svg>
          </PinnedButton>
        </Pinned>
        <TaskList>
          {tasks.map((task) => (
            <Task key={task.name} $active={task.active}>
              {task.icon}
              <span>{task.name}</span>
            </Task>
          ))}
        </TaskList>
        <Tray>
          <TrayButton aria-label="Show hidden icons">
            <svg width="12" height="8"><path d="M1 7l5-5 5 5" fill="none" stroke="#fff" strokeWidth="1.5" /></svg>
          </TrayButton>
          <TrayButton aria-label="Alerts">
            <svg width="14" height="14" fill="#fff">
              <path d="M7 0q1 0 1 1c3 1 4 3 4 6v3l2 2H0l2-2V7c0-3 1-5 4-6q0-1 1-1zM5 12.5h4L7 14z" />
            </svg>
          </TrayButton>
          <TrayButton aria-label="Security">
            <svg width="16" height="16">
              <circle cx="8" cy="8" r="8" fill="#f4d010" />
              <path d="M8 0a8 8 0 0 1 8 8l-5 5-8-8z" fill="#60b830" />
              <circle cx="8" cy="8" r="5" fill="#f8e020" />
              <path d="M8 5v6M5 8h6" stroke="#208020" strokeWidth="2" />
            </svg>
          </TrayButton>
          <TrayButton aria-label="Network">
            <svg width="16" height="14" fill="none" stroke="#fff">
              <path d="M4.5 1.5h11v8h-11M7 12.5h7M10.5 10v2M0.5 1.5h4v4h-4zM2.5 6v7h3" />
            </svg>
          </TrayButton>
          <TrayButton aria-label="Volume">
            <svg width="17" height="14" fill="none" stroke="#fff">
              <path d="M0.5 4.5h3L7 1v12L3.5 9.5h-3zM9 5q2 2 0 4M11 3q4 4 0 8M13 1q6 6 0 12" />
            </svg>
          </TrayButton>
          <TrayButton aria-label="Input method">中</TrayButton>
          <Clock>18:57<br />2022/7/21</Clock>
          <Notice aria-label="1 new notification">
            <svg width="26" height="26" viewBox="0 0 26 26">
              <path d="M2 2h16v13h-8l-3 4v-4H2z" fill="#fff" />
              <path d="M5 5.5h10M5 8.5h10M5 11.5h7" stroke="#1b282d" />
              <circle cx="17" cy="18" r="7.5" fill="#2c383e" stroke="#8a9296" />
              <path d="M15 16l2-2v8" fill="none" stroke="#fff" strokeWidth="1.5" />
            </svg>
          </Notice>
          <ShowDesktop />
        </Tray>
      </TaskBar>
    </Page>
  );
};

export default App;
